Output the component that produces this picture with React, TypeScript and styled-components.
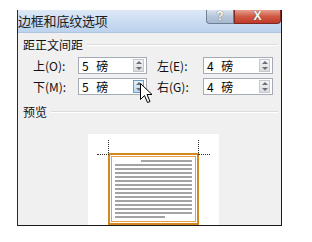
import React from "react";
import styled, { createGlobalStyle } from "styled-components";

const Global = createGlobalStyle`
  html, body { margin: 0; padding: 0; background: #ffffff; }
  body { font-family: "Noto Sans CJK SC", "Liberation Sans", sans-serif; }
`;

const Page = styled.div`
  width: 312px;
  height: 242px;
  padding: 10px 0 0 17px;
  box-sizing: border-box;
  position: relative;
  overflow: hidden;
`;

const Dialog = styled.div`
  width: 265px;
  height: 216px;
  box-sizing: border-box;
  border-left: 1px solid #2a2a2a;
  border-right: 1px solid #1a1a1a;
  border-bottom: 1px solid #1a1a1a;
  display: flex;
  flex-direction: column;
  background: #f0f0f0;
`;

const TitleBar = styled.div`
  height: 23px;
  display: flex;
  align-items: flex-start;
  background: linear-gradient(#dfe9f6, #c9dbf1 55%, #bcd2ed);
  border-bottom: 1px solid #aec3de;
`;

const Title = styled.div`
  flex: 1;
  font-size: 13px;
  line-height: 22px;
  color: #1c1c1c;
  letter-spacing: -0.2px;
`;

const CtrlButton = styled.div<{ $close?: boolean }>`
  width: ${(p) => (p.$close ? "47px" : "28px")};
  height: 14px;
  box-sizing: border-box;
  border: 1px solid ${(p) => (p.$close ? "#7a2a22" : "#6d7e95")};
  border-top: none;
  border-radius: ${(p) => (p.$close ? "0 0 4px 0" : "0 0 0 4px")};
  background: ${(p) =>
    p.$close
      ? "linear-gradient(#e7a08f, #cf5a44 50%, #c0392b)"
      : "linear-gradient(#dbe4ef, #b6c6da 50%, #a8bad0)"};
  color: #ffffff;
  font-family: "Liberation Sans", sans-serif;
  font-weight: bold;
  font-size: 12px;
  line-height: 13px;
  text-align: center;
  text-shadow: 0 0 1px #333;
`;

const Body = styled.div`
  flex: 1;
  padding: 4px 0 0 5px;
  display: flex;
  flex-direction: column;
`;

const GroupHeader = styled.div`
  display: flex;
  align-items: center;
  gap: 4px;
  height: 15px;
  font-size: 12px;
  color: #111;
  padding-right: 3px;
  &::after {
    content: "";
    flex: 1;
    height: 1px;
    background: #dcdcdc;
    border-bottom: 1px solid #ffffff;
  }
`;

const Rows = styled.div`
  display: flex;
  flex-direction: column;
  gap: 4px;
  padding: 5px 0 0 10px;
`;

const Row = styled.div`
  display: flex;
  align-items: center;
  height: 17px;
`;

const Label = styled.div<{ $w: number }>`
  width: ${(p) => p.$w}px;
  font-size: 12px;
  color: #111;
  white-space: nowrap;
`;

const Field = styled.div<{ $w: number }>`
  width: ${(p) => p.$w}px;
  height: 17px;
  box-sizing: border-box;
  border: 1px solid #a5acb5;
  background: #fff;
  display: flex;
  align-items: stretch;
  padding: 1px 2px 1px 3px;
`;

const FieldText = styled.div`
  flex: 1;
  font-size: 12px;
  line-height: 13px;
  color: #000;
  word-spacing: 5px;
`;

const Spin = styled.div<{ $hot?: boolean }>`
  width: 11px;
  display: flex;
  flex-direction: column;
  border: 1px solid ${(p) => (p.$hot ? "#6c9bc7" : "#c4c8ce")};
  background: ${(p) => (p.$hot ? "linear-gradient(#e6f2fb, #b9d8f1)" : "linear-gradient(#f4f4f4, #dcdcdc)")};
  box-sizing: border-box;
`;

const SpinHalf = styled.div<{ $down?: boolean }>`
  flex: 1;
  display: flex;
  align-items: center;
  justify-content: center;
  &::before {
    content: "";
    border-left: 3px solid transparent;
    border-right: 3px solid transparent;
    ${(p) => (p.$down ? "border-top: 3px solid #6a6f78;" : "border-bottom: 3px solid #6a6f78;")}
  }
`;

const Gap = styled.div<{ $w: number }>`
  width: ${(p) => p.$w}px;
`;

const PreviewHeader = styled(GroupHeader)`
  margin-top: 9px;
`;

const PreviewArea = styled.div`
  margin: 15px 0 0 65px;
  width: 131px;
  flex: 1;
  background: #ffffff;
  position: relative;
  display: flex;
  justify-content: center;
  padding-top: 19px;
  box-sizing: border-box;
`;

const Sheet = styled.div`
  width: 91px;
  height: 72px;
  box-sizing: border-box;
  border: 2px solid #d3891f;
  padding: 1px;
  position: relative;
`;

const SheetInner = styled.div`
  height: 100%;
  box-sizing: border-box;
  border: 1px solid #e3a24a;
  padding: 3px 3px 0 3px;
  display: flex;
  flex-direction: column;
  gap: 2px;
`;

const TextLine = styled.div<{ $start?: number; $end?: number }>`
  height: 2px;
  background: #a3a3a3;
  margin-left: ${(p) => p.$start ?? 0}px;
  margin-right: ${(p) => p.$end ?? 0}px;
`;

const CornerMark = styled.div<{ $right?: boolean }>`
  position: absolute;
  top: -15px;
  ${(p) => (p.$right ? "right: -13px;" : "left: -13px;")}
  width: 12px;
  height: 15px;
  ${(p) =>
    p.$right
      ? "border-left: 1px dotted #333; border-bottom: 1px dotted #333;"
      : "border-right: 1px dotted #333; border-bottom: 1px dotted #333;"}
  box-sizing: border-box;
`;

const Cursor = styled.svg`
  position: absolute;
  left: 140px;
  top: 83px;
`;

function SpinField({ w, value, hot }: { w: number; value: string; hot?: boolean }) {
  return (
    <Field $w={w}>
      <FieldText>{value}</FieldText>
      <Spin $hot={hot}>
        <SpinHalf />
        <SpinHalf $down />
      </Spin>
    </Field>
  );
}

export default function App() {
  const fullLines = Array.from({ length: 13 });
  return (
    <>
      <Global />
      <Page>
        <Dialog>
          <TitleBar>
            <Title>边框和底纹选项</Title>
            <CtrlButton>?</CtrlButton>
            <CtrlButton $close>X</CtrlButton>
          </TitleBar>
          <Body>
            <GroupHeader>距正文间距</GroupHeader>
            <Rows>
              <Row>
                <Label $w={45}>上(O):</Label>
                <SpinField w={69} value="5 磅" />
                <Gap $w={10} />
                <Label $w={46}>左(E):</Label>
                <SpinField w={70} value="4 磅" />
              </Row>
              <Row>
                <Label $w={45}>下(M):</Label>
                <SpinField w={69} value="5 磅" hot />
                <Gap $w={10} />
                <Label $w={46}>右(G):</Label>
                <SpinField w={70} value="4 磅" />
              </Row>
            </Rows>
            <PreviewHeader>预览</PreviewHeader>
            <PreviewArea>
              <Sheet>
                <CornerMark />
                <CornerMark $right />
                <SheetInner>
                  <TextLine $start={26} />
                  {fullLines.map((_, i) => (
                    <TextLine key={i} />
                  ))}
                  <TextLine $end={27} />
                </SheetInner>
              </Sheet>
            </PreviewArea>
          </Body>
        </Dialog>
        <Cursor width="13" height="21" viewBox="0 0 13 21">
          <path
            d="M0.5 0.5 L0.5 16.5 L4.5 12.5 L7.5 19.5 L10 18.5 L7 11.5 L12 11.5 Z"
            fill="#ffffff"
            stroke="#000000"
            strokeWidth="1"
            strokeLinejoin="miter"
          />
        </Cursor>
      </Page>
    </>
  );
}
